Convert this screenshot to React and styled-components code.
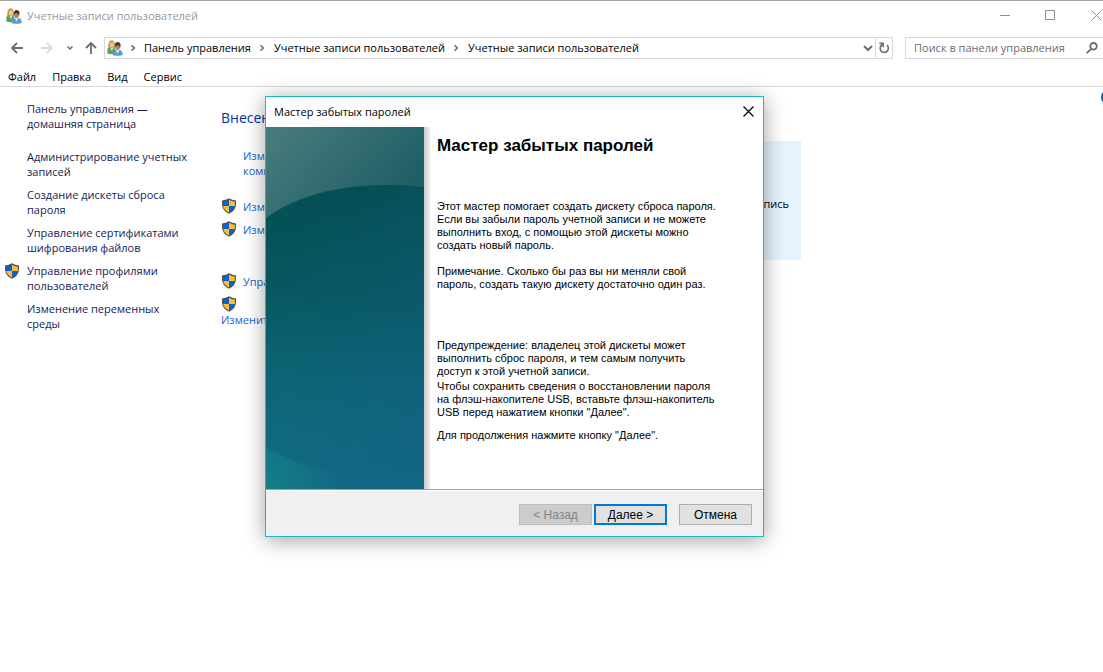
import React from 'react';
import styled, { createGlobalStyle } from 'styled-components';

const uiFont = '"Open Sans", "Noto Sans", sans-serif';
const dialogFont = '"Liberation Sans", Arial, sans-serif';

const GlobalStyle = createGlobalStyle`
  *, *::before, *::after { box-sizing: border-box; }
  body {
    margin: 0;
    background: #fff;
    color: #000;
    font: 11px/15px ${uiFont};
    overflow: hidden;
  }
  button, input { font: inherit; color: inherit; }
  h1, h2, p, ul { margin: 0; padding: 0; }
  a { text-decoration: none; color: inherit; }
  svg { display: block; flex: none; }
`;

const Window = styled.div`
  position: relative;
  min-height: 100vh;
  overflow: hidden;
  border-top: 1px solid #a5a5a5;
`;

const IconButton = styled.button`
  display: flex;
  align-items: center;
  justify-content: center;
  flex: none;
  width: ${(p) => p.$width}px;
  height: ${(p) => p.$height || 20}px;
  padding: 0;
  border: 0;
  background: none;
  color: ${(p) => p.$color || '#6d6d6d'};
`;

const TitleBar = styled.header`
  display: flex;
  align-items: center;
  height: 29px;
  margin-right: -16px;
  padding-left: 6px;
  gap: 5px;
  color: #999;
`;

const WindowTitle = styled.h1`
  flex: 1;
  font-size: 11px;
  font-weight: 400;
`;

const WindowControls = styled.div`
  display: flex;
`;

const NavBar = styled.nav`
  display: flex;
  height: 22px;
  margin-top: 7px;
`;

const NavButtons = styled.div`
  display: flex;
  align-items: center;
  width: 104px;
  padding-left: 6px;
`;

const AddressBar = styled.div`
  display: flex;
  align-items: center;
  flex: 1;
  padding-left: 2px;
  border: 1px solid #d9d9d9;
`;

const Crumbs = styled.ul`
  display: flex;
  align-items: center;
  flex: 1;
  gap: 2px;
  list-style: none;
`;

const Crumb = styled.li`
  display: flex;
  align-items: center;
  white-space: nowrap;
`;

const CrumbLink = styled.a`
  padding-bottom: 2px;
`;

const Separator = styled.span`
  display: flex;
  justify-content: center;
  width: 21px;
  padding-right: 2px;
  color: #6d6d6d;
`;

const RefreshCell = styled.div`
  display: flex;
  align-items: center;
  height: 20px;
  border-left: 1px solid #d9d9d9;
`;

const SearchBox = styled.form`
  display: flex;
  align-items: center;
  width: 198px;
  margin-left: 12px;
  border: 1px solid #d9d9d9;
  border-right: 0;
`;

const SearchInput = styled.input`
  flex: 1;
  min-width: 0;
  height: 20px;
  padding: 0 0 2px 8px;
  border: 0;
  outline: 0;
  background: none;
  &::placeholder { color: #6d6d6d; opacity: 1; }
`;

const MenuBar = styled.div`
  display: flex;
  align-items: center;
  gap: 16px;
  height: 28px;
  padding: 8px 8px 0;
  border-bottom: 1px solid #d9d9d9;
`;

const MenuItem = styled.button`
  padding: 0;
  border: 0;
  background: none;
`;

const Content = styled.div`
  display: flex;
`;

const Sidebar = styled.aside`
  flex: none;
  width: 221px;
  padding-top: 14px;
  color: #151c55;
`;

const SideList = styled.ul`
  display: flex;
  flex-direction: column;
  gap: 8px;
  margin-top: 18px;
  list-style: none;
`;

const SideItem = styled.li`
  display: grid;
  grid-template-columns: 23px 1fr;
  padding-left: 4px;
`;

const SideHome = styled(SideItem).attrs({ as: 'div' })``;

const SideLink = styled.a`
  grid-column: 2;
  white-space: nowrap;
`;

const Main = styled.main`
  flex: 1;
  min-width: 0;
  padding-top: 20px;
`;

const Heading = styled.h2`
  color: #003399;
  font-size: 14px;
  line-height: 22px;
  font-weight: 400;
  white-space: nowrap;
`;

const Columns = styled.div`
  display: flex;
  align-items: flex-start;
  margin-top: 12px;
`;

const Tasks = styled.ul`
  flex: none;
  width: 280px;
  padding-top: 7px;
  list-style: none;
  color: #1a66cc;
`;

const Task = styled.li`
  display: flex;
  flex-direction: ${(p) => (p.$stacked ? 'column' : 'row')};
  align-items: ${(p) => (p.$stacked ? 'flex-start' : 'center')};
  min-height: 16px;
  margin-bottom: ${(p) => p.$after || 7}px;
  padding-left: ${(p) => (p.$indent ? 22 : 0)}px;
  gap: ${(p) => (p.$stacked ? 0 : 6)}px;
`;

const TaskLink = styled.a`
  white-space: nowrap;
`;

const AccountTile = styled.section`
  display: flex;
  align-items: center;
  justify-content: flex-end;
  width: 300px;
  height: 119px;
  padding: 6px 12px 0 0;
  background: #e5f3ff;
`;

const HelpRail = styled.div`
  flex: none;
  width: 2px;
  padding-top: 2px;
`;

const Dialog = styled.section`
  position: absolute;
  left: 265px;
  top: 95px;
  width: 499px;
  border: 1px solid #1fb6c1;
  background: #fff;
  box-shadow: 0 3px 20px rgba(0, 0, 0, 0.38);
`;

const DialogTitleBar = styled.header`
  display: flex;
  align-items: center;
  justify-content: space-between;
  height: 30px;
  padding: 0 0 2px 8px;
`;

const DialogBody = styled.div`
  display: flex;
  height: 362px;
`;

const Banner = styled.div`
  flex: none;
  width: 164px;
  padding-right: 6px;
  background: linear-gradient(to right, #c9c9c9 158px, #dadada 160px, #ededed 164px);
`;

const DialogText = styled.div`
  flex: 1;
  padding: 9px 7px 0;
  font: 11px/13px ${dialogFont};
  white-space: nowrap;
`;

const DialogHeading = styled.h2`
  font-size: 17px;
  line-height: 20px;
  font-weight: 700;
`;

const Paragraph = styled.p`
  margin-top: ${(p) => p.$before}px;
`;

const DialogFooter = styled.footer`
  display: flex;
  justify-content: flex-end;
  height: 47px;
  padding: 14px 11px 0;
  border-top: 1px solid #a0a0a0;
  background: #f0f0f0;
  box-shadow: inset 0 1px 0 #fff;
  font: 12px/15px ${dialogFont};
`;

const PushButton = styled.button`
  display: flex;
  align-items: center;
  justify-content: center;
  width: 73px;
  height: 21px;
  margin-left: ${(p) => p.$before || 0}px;
  padding: 2px 0 0;
  border: ${(p) => (p.$primary ? '2px solid #0078d7' : '1px solid #adadad')};
  background: #e1e1e1;
  &:disabled {
    border-color: #bfbfbf;
    background: #cccccc;
    color: #838383;
  }
`;

function UsersIcon() {
  return (
    <svg width="16" height="16" viewBox="0 0 16 16" aria-hidden="true">
      <path d="M0.3 13.5V9.2Q0.5 7.2 3 7L7 7.2Q8.6 8 8.4 13.5Q4 15 0.3 13.5Z" fill="#65a05a" />
      <path d="M3.2 7.2L4.8 11L6.4 7.4Z" fill="#d8ecc9" />
      <path d="M1.2 7.6Q1 0.4 4.8 0.3Q8.4 0.5 8 7.4L6 8H3Z" fill="#b59a45" />
      <ellipse cx="4.9" cy="4.7" rx="2" ry="2.8" fill="#f0c79c" />
      <path d="M2.6 4.2Q3.2 1.8 5 2Q6.8 2 7.2 4.2Q5.5 3.8 4.8 2.8Q4.2 3.9 2.6 4.2Z" fill="#d6bc63" />
      <path d="M5.8 15.2Q5.6 10.6 8.4 10.1H12.6Q15.8 10.6 15.7 15Q11 16.6 5.8 15.2Z" fill="#5b9bd5" />
      <path d="M8.8 10L10.6 13.4L12.4 10Z" fill="#e5f2fb" />
      <path d="M7.9 6.6Q7.3 2.3 10.8 2.1Q14.3 2.4 13.4 7Q12.8 8.5 10.6 8.6Q8.2 8.6 7.9 6.6Z" fill="#43382b" />
      <ellipse cx="10.5" cy="7.2" rx="2.2" ry="3" fill="#b9825a" />
      <path d="M8.2 5.7Q9 3.8 10.8 4Q12.4 4 13 5.9Q11 4.9 8.2 5.7Z" fill="#332c26" />
    </svg>
  );
}

function Shield() {
  return (
    <svg width="16" height="16" viewBox="0 0 16 16" aria-hidden="true">
      <path d="M8 0.3Q11 2.3 15 2.6V6.5Q14.7 12.7 8 15.8Q1.3 12.7 1 6.5V2.6Q5 2.3 8 0.3Z" fill="#4c5257" />
      <path d="M8 1.7V8H2.2Q2 6 2.1 3.7Q5.6 3.3 8 1.7Z" fill="#0a63c9" />
      <path d="M8 1.7Q10.4 3.3 13.9 3.7Q14 6 13.8 8H8Z" fill="#fdbd3b" />
      <path d="M2.2 8H8V14.5Q3.1 12 2.2 8Z" fill="#fdbd3b" />
      <path d="M8 8H13.8Q12.9 12 8 14.5Z" fill="#0a63c9" />
    </svg>
  );
}

function Stroke({ size = 12, d, width = 1 }) {
  return (
    <svg width={size} height={size} viewBox={`0 0 ${size} ${size}`} fill="none" stroke="currentColor" strokeWidth={width} aria-hidden="true">
      <path d={d} />
    </svg>
  );
}

const Chevron = () => <Stroke size={8} d="M2.5 1.2L5.3 4L2.5 6.8" width={1.6} />;

function BannerArt() {
  return (
    <svg width="158" height="362" viewBox="0 0 158 362" aria-hidden="true">
      <defs>
        <linearGradient id="sky" gradientUnits="userSpaceOnUse" x1="20" y1="0" x2="110" y2="85">
          <stop offset="0" stopColor="#457a7b" />
          <stop offset="1" stopColor="#215f67" />
        </linearGradient>
        <linearGradient id="deep" gradientUnits="userSpaceOnUse" x1="80" y1="60" x2="40" y2="362">
          <stop offset="0" stopColor="#044f55" />
          <stop offset="0.35" stopColor="#05565b" />
          <stop offset="1" stopColor="#0d7a80" />
        </linearGradient>
        <linearGradient id="side" gradientUnits="userSpaceOnUse" x1="20" y1="110" x2="158" y2="300">
          <stop offset="0" stopColor="#155f86" stopOpacity="0" />
          <stop offset="1" stopColor="#155f86" stopOpacity="0.68" />
        </linearGradient>
        <radialGradient id="corner" gradientUnits="userSpaceOnUse" cx="0" cy="355" r="75">
          <stop offset="0" stopColor="#168589" stopOpacity="0.7" />
          <stop offset="1" stopColor="#168589" stopOpacity="0" />
        </radialGradient>
      </defs>
      <rect width="158" height="362" fill="url(#sky)" />
      <path d="M0 91C30 69 72 58 120 58Q140 58 158 60V362H0Z" fill="url(#deep)" />
      <path d="M0 91C30 69 72 58 120 58Q140 58 158 60V362H0Z" fill="url(#side)" />
      <path d="M0 320Q25 337 70 345V362H0Z" fill="url(#corner)" />
    </svg>
  );
}

const crumbs = ['Панель управления', 'Учетные записи пользователей', 'Учетные записи пользователей'];
const menus = ['Файл', 'Правка', 'Вид', 'Сервис'];
const sideLinks = [
  { lines: ['Администрирование учетных', 'записей'] },
  { lines: ['Создание дискеты сброса', 'пароля'] },
  { lines: ['Управление сертификатами', 'шифрования файлов'] },
  { lines: ['Управление профилями', 'пользователей'], shield: true },
  { lines: ['Изменение переменных', 'среды'] },
];

function Lines({ of }) {
  return of.map((line, i) => (
    <React.Fragment key={line}>
      {i > 0 && <br />}
      {line}
    </React.Fragment>
  ));
}

export default function App() {
  return (
    <Window>
      <GlobalStyle />
      <TitleBar>
        <UsersIcon />
        <WindowTitle>Учетные записи пользователей</WindowTitle>
        <WindowControls>
          <IconButton $width={45} $height={29} $color="#8f8f8f" aria-label="Свернуть">
            <Stroke size={11} d="M0 5.5H10" />
          </IconButton>
          <IconButton $width={45} $height={29} $color="#8f8f8f" aria-label="Развернуть">
            <Stroke size={11} d="M0.5 0.5H9.5V9.5H0.5Z" />
          </IconButton>
          <IconButton $width={46} $height={29} $color="#8f8f8f" aria-label="Закрыть">
            <Stroke size={11} d="M0.5 0.5L10.5 10.5M10.5 0.5L0.5 10.5" />
          </IconButton>
        </WindowControls>
      </TitleBar>

      <NavBar aria-label="Навигация">
        <NavButtons>
          <IconButton $width={22} aria-label="Назад">
            <Stroke size={12} d="M12 6H1M6 1L1 6L6 11" width={1.8} />
          </IconButton>
          <IconButton $width={38} $color="#dcdcdc" aria-label="Вперед">
            <Stroke size={12} d="M0 6H11M6 1L11 6L6 11" width={1.8} />
          </IconButton>
          <IconButton $width={8} aria-label="Последние расположения">
            <Stroke size={8} d="M1.5 2.5L4 5L6.5 2.5" width={1.5} />
          </IconButton>
          <IconButton $width={34} aria-label="Вверх">
            <Stroke size={12} d="M6 12V1M1 6L6 1L11 6" width={1.8} />
          </IconButton>
        </NavButtons>
        <AddressBar>
          <UsersIcon />
          <Crumbs>
            {crumbs.map((name, i) => (
              <Crumb key={i}>
                <Separator><Chevron /></Separator>
                <CrumbLink href="#crumb">{name}</CrumbLink>
              </Crumb>
            ))}
          </Crumbs>
          <IconButton $width={15} aria-label="Показать адреса">
            <Stroke size={10} d="M1 3L5 7L9 3" width={2} />
          </IconButton>
          <RefreshCell>
            <IconButton $width={16} aria-label="Обновить">
              <Stroke size={12} d="M9 3.2A4.1 4.1 0 1 1 4.2 2.7M1.4 1.4H5.2V5.2" width={1.6} />
            </IconButton>
          </RefreshCell>
        </AddressBar>
        <SearchBox role="search">
          <SearchInput type="text" aria-label="Поиск" placeholder="Поиск в панели управления" />
          <IconButton $width={22} type="button" aria-label="Найти">
            <Stroke size={12} d="M4.6 7.4L0.8 11.2M10.8 4.3A3.3 3.3 0 1 1 4.2 4.3A3.3 3.3 0 1 1 10.8 4.3Z" width={1.8} />
          </IconButton>
        </SearchBox>
      </NavBar>

      <MenuBar>
        {menus.map((name) => <MenuItem key={name}>{name}</MenuItem>)}
      </MenuBar>

      <Content>
        <Sidebar>
          <SideHome>
            <SideLink href="#home"><Lines of={['Панель управления —', 'домашняя страница']} /></SideLink>
          </SideHome>
          <SideList>
            {sideLinks.map(({ lines, shield }) => (
              <SideItem key={lines[0]}>
                {shield && <Shield />}
                <SideLink href="#task"><Lines of={lines} /></SideLink>
              </SideItem>
            ))}
          </SideList>
        </Sidebar>

        <Main>
          <Heading>Внесен</Heading>
          <Columns>
            <Tasks>
              <Task $indent $after={20}>
                <TaskLink href="#pc"><Lines of={['Изменить учетную запись', 'компьютера']} /></TaskLink>
              </Task>
              <Task><Shield /><TaskLink href="#name">Изменить имя</TaskLink></Task>
              <Task $after={36}><Shield /><TaskLink href="#type">Изменить тип</TaskLink></Task>
              <Task><Shield /><TaskLink href="#manage">Управление записью</TaskLink></Task>
              <Task $stacked>
                <Shield />
                <TaskLink href="#control">Изменить параметры контроля</TaskLink>
              </Task>
            </Tasks>
            <AccountTile>запись</AccountTile>
          </Columns>
        </Main>

        <HelpRail>
          <IconButton $width={16} $height={16} aria-label="Справка">
            <svg width="16" height="16" viewBox="0 0 16 16" aria-hidden="true">
              <circle cx="8" cy="8" r="8" fill="#0f5ba8" />
            </svg>
          </IconButton>
        </HelpRail>
      </Content>

      <Dialog role="dialog" aria-label="Мастер забытых паролей">
        <DialogTitleBar>
          <span>Мастер забытых паролей</span>
          <IconButton $width={30} $height={28} $color="#000" aria-label="Закрыть">
            <Stroke size={11} d="M0.5 0.5L10.5 10.5M10.5 0.5L0.5 10.5" width={1.2} />
          </IconButton>
        </DialogTitleBar>
        <DialogBody>
          <Banner><BannerArt /></Banner>
          <DialogText>
            <DialogHeading>Мастер забытых паролей</DialogHeading>
            <Paragraph $before={44}>
              <Lines of={[
                'Этот мастер помогает создать дискету сброса пароля.',
                'Если вы забыли пароль учетной записи и не можете',
                'выполнить вход, с помощью этой дискеты можно',
                'создать новый пароль.',
              ]} />
            </Paragraph>
            <Paragraph $before={13}>
              <Lines of={['Примечание. Сколько бы раз вы ни меняли свой', 'пароль, создать такую дискету достаточно один раз.']} />
            </Paragraph>
            <Paragraph $before={48}>
              <Lines of={[
                'Предупреждение: владелец этой дискеты может',
                'выполнить сброс пароля, и тем самым получить',
                'доступ к этой учетной записи.',
              ]} />
            </Paragraph>
            <Paragraph $before={2}>
              <Lines of={[
                'Чтобы сохранить сведения о восстановлении пароля',
                'на флэш-накопителе USB, вставьте флэш-накопитель',
                'USB перед нажатием кнопки "Далее".',
              ]} />
            </Paragraph>
            <Paragraph $before={10}>Для продолжения нажмите кнопку "Далее".</Paragraph>
          </DialogText>
        </DialogBody>
        <DialogFooter>
          <PushButton disabled>&lt; Назад</PushButton>
          <PushButton $primary $before={2}>Далее &gt;</PushButton>
          <PushButton $before={12}>Отмена</PushButton>
        </DialogFooter>
      </Dialog>
    </Window>
  );
}
